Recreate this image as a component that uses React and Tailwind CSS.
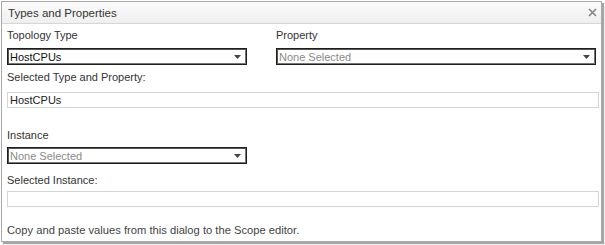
import React from 'react';

function Select({ value, placeholder, className }) {
  return (
    <div className={`flex h-[17px] items-center justify-between border border-[#1e1e1e] bg-white pl-[2px] pr-[5px] shadow-[inset_1px_1px_0_#555,inset_-1px_-1px_0_#777] ${className}`}>
      <span className={value ? 'text-[#111]' : 'text-[#8a8a8a]'}>{value || placeholder}</span>
      <svg width="7" height="4" viewBox="0 0 7 4">
        <path d="M0 0h7L3.5 4z" fill="#444" />
      </svg>
    </div>
  );
}

function TextBox({ value }) {
  return (
    <div className="flex h-[16px] items-center border border-[#d4d4d4] bg-white px-[2px] text-[#222]">
      {value}
    </div>
  );
}

export default function App() {
  return (
    <div className="h-[245px] w-[605px] bg-white pl-px pt-px font-['Liberation_Sans',Arial,sans-serif] text-[11px] leading-[14px] text-[#333]">
      <div className="flex h-[241px] w-[601px] flex-col border border-[#a8a8a8] bg-white shadow-[2px_2px_1px_rgba(0,0,0,0.35)]">
        <div className="flex h-[22px] shrink-0 items-center justify-between border-b border-[#d6d6d6] bg-gradient-to-b from-[#fbfbfb] to-[#efefef] pl-[6px] pr-[4px] text-[11.5px] text-[#333]">
          <span>Types and Properties</span>
          <svg width="9" height="9" viewBox="0 0 9 9">
            <path d="M1 1l7 7M8 1L1 8" stroke="#888" strokeWidth="1.7" />
          </svg>
        </div>
        <div className="flex flex-col pl-[5px] pr-[2px] pt-[4px]">
          <div className="grid grid-cols-[240px_1fr] gap-x-[29px]">
            <span>Topology Type</span>
            <span>Property</span>
            <Select value="HostCPUs" className="mt-[6px]" />
            <Select placeholder="None Selected" className="mt-[6px] mr-[3px]" />
          </div>
          <span className="mt-[5px]">Selected Type and Property:</span>
          <div className="mt-[8px]">
            <TextBox value="HostCPUs" />
          </div>
          <span className="mt-[20px]">Instance</span>
          <Select placeholder="None Selected" className="mt-[5px] w-[240px]" />
          <span className="mt-[9px]">Selected Instance:</span>
          <div className="mt-[4px]">
            <TextBox value="" />
          </div>
          <span className="mt-[16px] text-[11.2px] text-[#444]">Copy and paste values from this dialog to the Scope editor.</span>
        </div>
      </div>
    </div>
  );
}
